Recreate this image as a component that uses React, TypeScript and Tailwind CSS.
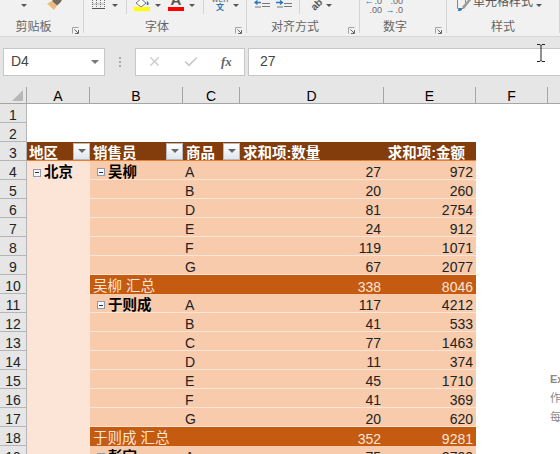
import type { ReactNode } from "react";
import { Check, X } from "lucide-react";

const font = "[font-family:'Liberation_Sans','Noto_Sans_CJK_SC',sans-serif]";

type Row =
  | { kind: "item"; no: number; region?: string; seller?: string; product: string; qty: number; amount: number }
  | { kind: "total"; no: number; label: string; qty: number; amount: number };

const rows: Row[] = [
  { kind: "item", no: 4, region: "北京", seller: "吴柳", product: "A", qty: 27, amount: 972 },
  { kind: "item", no: 5, product: "B", qty: 20, amount: 260 },
  { kind: "item", no: 6, product: "D", qty: 81, amount: 2754 },
  { kind: "item", no: 7, product: "E", qty: 24, amount: 912 },
  { kind: "item", no: 8, product: "F", qty: 119, amount: 1071 },
  { kind: "item", no: 9, product: "G", qty: 67, amount: 2077 },
  { kind: "total", no: 10, label: "吴柳 汇总", qty: 338, amount: 8046 },
  { kind: "item", no: 11, seller: "于则成", product: "A", qty: 117, amount: 4212 },
  { kind: "item", no: 12, product: "B", qty: 41, amount: 533 },
  { kind: "item", no: 13, product: "C", qty: 77, amount: 1463 },
  { kind: "item", no: 14, product: "D", qty: 11, amount: 374 },
  { kind: "item", no: 15, product: "E", qty: 45, amount: 1710 },
  { kind: "item", no: 16, product: "F", qty: 41, amount: 369 },
  { kind: "item", no: 17, product: "G", qty: 20, amount: 620 },
  { kind: "total", no: 18, label: "于则成 汇总", qty: 352, amount: 9281 },
  { kind: "item", no: 19, seller: "彭宇", product: "A", qty: 75, amount: 2700 },
];

function Launcher() {
  return (
    <svg width="7" height="7" viewBox="0 0 7 7" className="shrink-0">
      <path d="M0.5 6.5V0.5H6.5" fill="none" stroke="#a5a5a5" />
      <path d="M2.5 2.5l3.5 3.5M6.5 3v3.5H3" fill="none" stroke="#666" />
    </svg>
  );
}

function Group({ width, label, launcher, children }: { width: string; label: string; launcher?: boolean; children?: ReactNode }) {
  return (
    <div className={`${width} flex h-[33px] shrink-0 flex-col border-r border-[#d4d4d4]`}>
      <div className="flex h-[19px] items-start overflow-hidden">{children}</div>
      <div className={`relative flex h-[14px] items-center justify-center pt-[2px] text-[12px] leading-none text-[#666] ${launcher ? "pr-[16px]" : ""}`}>
        {label}
        {launcher && (
          <span className="absolute right-[4px] top-[8px] flex">
            <Launcher />
          </span>
        )}
      </div>
    </div>
  );
}

function Caret({ className = "" }: { className?: string }) {
  return (
    <span className={`mt-[4px] flex w-[8px] shrink-0 justify-center ${className}`}>
      <span className="h-0 w-0 border-x-[3px] border-t-[3px] border-x-transparent border-t-[#555]" />
    </span>
  );
}

function Divider({ className = "" }: { className?: string }) {
  return <span className={`h-[14px] w-px shrink-0 bg-[#d4d4d4] ${className}`} />;
}

function Indent({ right }: { right?: boolean }) {
  return (
    <svg width="16" height="8" viewBox="0 0 16 8" className="shrink-0">
      <path d={right ? "M0 2.5h6M4 0.5l2.5 2-2.5 2" : "M7 2.5H1M3.5 0.5l-2.5 2 2.5 2"} fill="none" stroke="#2e75b6" strokeWidth="1.3" />
      <path d="M8 3.5h8M8 6.5h8M1 7h6" fill="none" stroke="#777" />
    </svg>
  );
}

function Ribbon() {
  return (
    <div className="flex h-[37px] border-b border-[#d6d6d6] bg-[#f1f1f1]">
      <Group width="w-[84px]" label="剪贴板" launcher>
        <Caret className="ml-[20px]" />
        <svg width="15" height="10" viewBox="0 0 15 10" className="ml-[19px] shrink-0">
          <path d="M0 3.5L5 1l5 4.5L7 10z" fill="#ecbd78" />
          <path d="M6 0h9l-2 3-3 2.5L5 1z" fill="#75695e" />
        </svg>
      </Group>
      <Group width="w-[163px]" label="字体" launcher>
        <svg width="13" height="9" viewBox="0 0 13 9" className="ml-[8px] shrink-0">
          <path d="M.5 0v8.500h12V0M.5 4h12M4.500 0v8.500M8.500 0v8.500" fill="none" stroke="#777" strokeDasharray="1 1" />
          <path d="M0 8.500h13" stroke="#555" />
        </svg>
        <Caret className="ml-[6px]" />
        <Divider className="ml-[7px]" />
        <div className="ml-[7px] flex w-[16px] shrink-0 flex-col">
          <svg width="16" height="7" viewBox="0 0 16 7">
            <path d="M2 3l5-4 5 4-5 4z" fill="#fff" stroke="#777" />
            <path d="M13.500 1c1 1.500 1.500 2.500 1 3.500s-2 .5-2-.5.5-2 1-3" fill="#2e75b6" />
          </svg>
          <span className="h-[4px] w-[16px] bg-[#ffff00]" />
        </div>
        <Caret className="ml-[4px]" />
        <div className="ml-[6px] flex w-[16px] shrink-0 flex-col items-center">
          <span className="-mt-[7px] h-[14px] text-[15px] font-bold leading-[14px] text-[#555]">A</span>
          <span className="h-[4px] w-[16px] bg-[#ff0000]" />
        </div>
        <Caret className="ml-[4px]" />
        <Divider className="ml-[7px]" />
        <div className="ml-[8px] flex w-[16px] shrink-0 flex-col items-center">
          <span className="-mt-[5px] h-[9px] text-[9px] leading-[9px] text-[#666]">wén</span>
          <span className="h-[8px] text-[8px] font-bold leading-[8px] text-[#2e75b6]">文</span>
        </div>
        <Caret className="ml-[4px]" />
      </Group>
      <Group width="w-[113px]" label="对齐方式" launcher>
        <span className="ml-[7px] flex"><Indent /></span>
        <span className="ml-[6px] flex"><Indent right /></span>
        <Divider className="ml-[7px]" />
        <span className="ml-[8px] flex h-[9px] w-[17px] shrink-0 -rotate-45 items-center justify-center text-[10px] font-bold leading-none text-[#555]">ab</span>
        <Caret />
      </Group>
      <Group width="w-[87px]" label="数字" launcher>
        <div className="ml-[8px] flex w-[14px] shrink-0 flex-col items-end text-[9px] leading-[9px] text-[#666]">
          <span className="-mt-[3px] flex h-[9px] items-center">
            <span className="mr-[1px] text-[#2e75b6]">←</span>.0
          </span>
          <span>.00</span>
        </div>
        <div className="ml-[7px] flex w-[14px] shrink-0 flex-col items-end text-[9px] leading-[9px] text-[#666]">
          <span className="-mt-[3px] h-[9px]">.00</span>
          <span className="flex items-center">
            <span className="mr-[1px] text-[#2e75b6]">→</span>.0
          </span>
        </div>
      </Group>
      <Group width="w-[113px]" label="样式">
        <svg width="14" height="11" viewBox="0 0 14 11" className="ml-[10px] shrink-0">
          <path d="M.5 0v8.500h6M8.500 0v3" fill="none" stroke="#888" />
          <path d="M1 11c0-2 1-3 3-3l1 1c0 1.500-1 2-4 2z" fill="#2e75b6" />
          <path d="M5 7l6-7h3L7 9z" fill="#9a9a9a" />
        </svg>
        <span className="ml-[2px] -mt-[5px] text-[12px] leading-[14px] whitespace-nowrap text-[#555]">单元格样式</span>
        <Caret className="ml-[2px]" />
      </Group>
    </div>
  );
}

function FormulaBar() {
  return (
    <div className="flex h-[50px] items-center bg-[#e6e6e6] pb-[1px] pl-[3px]">
      <div className="flex h-[28px] w-[102px] items-center justify-between border border-[#c6c6c6] bg-white pl-[7px] pr-[5px] text-[14px] text-[#444]">
        D4
        <span className="h-0 w-0 border-x-[4px] border-t-[4px] border-x-transparent border-t-[#777]" />
      </div>
      <div className="ml-[14px] flex w-[3px] flex-col gap-[2px]">
        <span className="h-[2px] w-[2px] bg-[#aaa]" />
        <span className="h-[2px] w-[2px] bg-[#aaa]" />
        <span className="h-[2px] w-[2px] bg-[#aaa]" />
      </div>
      <div className="ml-[13px] flex h-[28px] w-[110px] items-center border border-[#c6c6c6] bg-white">
        <X size={15} strokeWidth={2} className="ml-[11px] text-[#c9c9c9]" />
        <Check size={16} strokeWidth={2.5} className="ml-[21px] text-[#c9c9c9]" />
        <span className="ml-[22px] font-['Liberation_Serif',serif] text-[13px] italic font-bold text-[#666]">fx</span>
      </div>
      <div className="ml-[3px] flex h-[28px] flex-1 items-center border-y border-l border-[#c6c6c6] bg-white pl-[11px] text-[14px] text-[#444]">
        27
      </div>
    </div>
  );
}

function RowNo({ no }: { no: number }) {
  return (
    <div className="flex items-center justify-center border-b border-r border-[#b5b5b5] bg-[#e6e6e6] pt-[3px] text-[14px] leading-none text-[#222]">
      {no}
    </div>
  );
}

function ColHead({ label }: { label: string }) {
  return (
    <div className="flex items-center justify-center border-b border-r border-[#a5a5a5] bg-[#e6e6e6] pt-[2px] text-[14px] leading-none text-black">
      {label}
    </div>
  );
}

function Filter() {
  return (
    <span className="flex h-[17px] w-[17px] shrink-0 items-center justify-center border border-[#b9b9b9] bg-gradient-to-b from-white to-[#dfe6ee]">
      <span className="h-0 w-0 border-x-[4px] border-t-[4px] border-x-transparent border-t-[#666]" />
    </span>
  );
}

function Minus() {
  return (
    <span className="mr-[3px] flex h-[8px] w-[8px] shrink-0 items-center justify-center border border-[#8c9bb0] bg-[#f4f7fb]">
      <span className="h-px w-[4px] bg-[#334]" />
    </span>
  );
}

function DataRow({ row }: { row: Row }) {
  const region = row.kind === "item" ? row.region : undefined;
  if (row.kind === "total") {
    return (
      <>
        <RowNo no={row.no} />
        <div className="bg-[#fce4d6]" />
        <div className="col-span-2 flex items-center bg-[#c55a11] pl-[3px] pt-[4px] text-[14.500px] leading-none text-[#fbe5d6]">{row.label}</div>
        <div className="flex items-center justify-end bg-[#c55a11] pr-[3px] pt-[4px] text-[14px] leading-none text-[#fbe5d6]">{row.qty}</div>
        <div className="flex items-center justify-end bg-[#c55a11] pr-[3px] pt-[4px] text-[14px] leading-none text-[#fbe5d6]">{row.amount}</div>
        <div className="col-span-2 bg-white" />
      </>
    );
  }
  return (
    <>
      <RowNo no={row.no} />
      <div className="flex items-center bg-[#fce4d6] pl-[6px] pt-[4px] text-[14.500px] font-bold leading-none text-black">
        {region && (
          <>
            <Minus />
            {region}
          </>
        )}
      </div>
      <div className="flex items-center border-b border-[#fce4d6] bg-[#f8cbad] pl-[7px] pt-[4px] text-[14.500px] font-bold leading-none text-black">
        {row.seller && (
          <>
            <Minus />
            {row.seller}
          </>
        )}
      </div>
      <div className="flex items-center border-b border-[#fce4d6] bg-[#f8cbad] pl-[2px] pt-[4px] text-[14px] leading-none text-[#222]">{row.product}</div>
      <div className="flex items-center justify-end border-b border-[#fce4d6] bg-[#f8cbad] pr-[3px] pt-[4px] text-[14px] leading-none text-[#222]">{row.qty}</div>
      <div className="flex items-center justify-end border-b border-[#fce4d6] bg-[#f8cbad] pr-[3px] pt-[4px] text-[14px] leading-none text-[#222]">{row.amount}</div>
      <div className="col-span-2 bg-white" />
    </>
  );
}

function HeadText({ children }: { children: ReactNode }) {
  return <span className="pt-[4px]">{children}</span>;
}

function Sheet() {
  const head = "flex items-center justify-between border-b border-[#ed7d31] bg-[#833c0b] text-[14.500px] font-bold leading-none whitespace-nowrap text-white";
  return (
    <div className="grid grid-cols-[27px_63px_93px_57px_144px_92px_72px_1fr] grid-rows-[17px] auto-rows-[19px] overflow-hidden">
      <div className="flex items-end justify-end border-b border-r border-[#a5a5a5] bg-[#e6e6e6] pb-[2px] pr-[3px]">
        <span className="h-0 w-0 border-b-[11px] border-l-[11px] border-b-[#b7b7b7] border-l-transparent" />
      </div>
      {["A", "B", "C", "D", "E", "F"].map((c) => (
        <ColHead key={c} label={c} />
      ))}
      <div className="border-b border-[#a5a5a5] bg-[#e6e6e6]" />

      <RowNo no={1} />
      <div className="col-span-7 bg-white" />
      <RowNo no={2} />
      <div className="col-span-7 bg-white" />

      <RowNo no={3} />
      <div className={`${head} pl-[2px]`}>
        <HeadText>地区</HeadText>
        <Filter />
      </div>
      <div className={`${head} pl-[3px]`}>
        <HeadText>销售员</HeadText>
        <Filter />
      </div>
      <div className={`${head} pl-[3px]`}>
        <HeadText>商品</HeadText>
        <Filter />
      </div>
      <div className={`${head} pl-[3px]`}>
        <HeadText>求和项:数量</HeadText>
      </div>
      <div className={`${head} !justify-end pr-[11px]`}>
        <HeadText>求和项:金额</HeadText>
      </div>
      <div className="col-span-2 bg-white" />

      {rows.map((row) => (
        <DataRow key={row.no} row={row} />
      ))}
    </div>
  );
}

export default function App() {
  return (
    <div className={`${font} relative h-[454px] w-[560px] overflow-hidden bg-white`}>
      <Ribbon />
      <FormulaBar />
      <Sheet />
      <div className="absolute left-[550px] top-[372px] flex flex-col gap-[4px] text-[11px] leading-[15px] text-[#8a8a8a]">
        <span className="font-bold">Ex</span>
        <span>作</span>
        <span>每</span>
      </div>
      <svg width="10" height="18" viewBox="0 0 10 18" className="absolute left-[536px] top-[44px]">
        <path d="M1 .5h3l1 1 1-1h3M1 17.500h3l1-1 1 1h3M5 1v16" fill="none" stroke="#222" />
      </svg>
    </div>
  );
}
